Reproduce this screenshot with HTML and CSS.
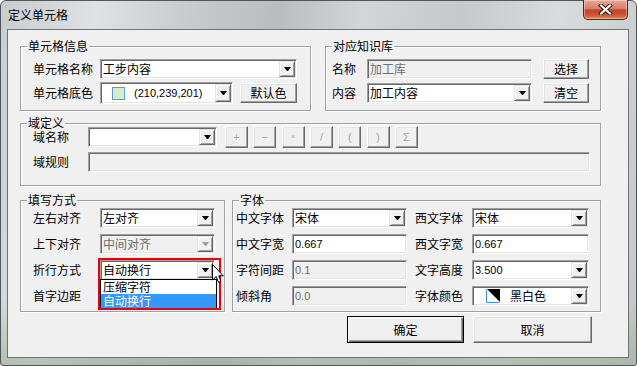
FILE: index.html
```html
<!DOCTYPE html>
<html lang="zh-CN">
<head>
  <meta charset="UTF-8" />
  <meta name="viewport" content="width=device-width, initial-scale=1.0"/>
  <title>定义单元格</title>
  <link rel="stylesheet" href="styles.css">
</head>
<body>

  <div class="window">

    <!-- Title bar -->
    <div class="titlebar">
      <span class="title">定义单元格</span>
      <div class="close-btn">
        <svg width="17" height="11" viewBox="0 0 17 11">
          <path d="M4 1.5 L13 9.5 M13 1.5 L4 9.5" stroke="#3b1a12" stroke-width="4.2" stroke-linecap="square" fill="none"/>
          <path d="M4 1.5 L13 9.5 M13 1.5 L4 9.5" stroke="#fff" stroke-width="2.2" stroke-linecap="square" fill="none"/>
        </svg>
      </div>
    </div>

    <!-- Client area -->
    <div class="client">

      <div class="row row-top">
        <!-- 单元格信息 -->
        <div class="group cell-info">
          <div class="group-title">单元格信息</div>
          <div class="form">
            <div class="form-row">
              <span class="label lw-67">单元格名称</span>
              <div class="field w-197">
                <span class="field-text">工步内容</span>
                <span class="drop-btn"></span>
              </div>
            </div>
            <div class="form-row">
              <span class="label lw-67">单元格底色</span>
              <div class="field color-field w-133">
                <span class="swatch"></span>
                <span class="field-text num">(210,239,201)</span>
                <span class="drop-btn"></span>
              </div>
              <button class="btn btn-default-color">默认色</button>
            </div>
          </div>
        </div>

        <!-- 对应知识库 -->
        <div class="group knowledge">
          <div class="group-title">对应知识库</div>
          <div class="form">
            <div class="form-row">
              <span class="label lw-35">名称</span>
              <div class="field disabled w-165">
                <span class="field-text">加工库</span>
              </div>
              <button class="btn btn-side">选择</button>
            </div>
            <div class="form-row">
              <span class="label lw-35">内容</span>
              <div class="field w-165">
                <span class="field-text">加工内容</span>
                <span class="drop-btn"></span>
              </div>
              <button class="btn btn-side">清空</button>
            </div>
          </div>
        </div>
      </div>

      <!-- 域定义 -->
      <div class="group domain">
        <div class="group-title">域定义</div>
        <div class="form">
          <div class="form-row">
            <span class="label lw-55">域名称</span>
            <div class="field w-129">
              <span class="field-text"></span>
              <span class="drop-btn"></span>
            </div>
            <div class="ops">
              <button class="btn op-btn">+</button>
              <button class="btn op-btn">−</button>
              <button class="btn op-btn op-small">×</button>
              <button class="btn op-btn">/</button>
              <button class="btn op-btn">(</button>
              <button class="btn op-btn">)</button>
              <button class="btn op-btn">Σ</button>
            </div>
          </div>
          <div class="form-row">
            <span class="label lw-55">域规则</span>
            <div class="field disabled w-502">
              <span class="field-text"></span>
            </div>
          </div>
        </div>
      </div>

      <div class="row row-bottom">
        <!-- 填写方式 -->
        <div class="group fill-mode">
          <div class="group-title">填写方式</div>
          <div class="form">
            <div class="form-row">
              <span class="label lw-67">左右对齐</span>
              <div class="field w-115">
                <span class="field-text">左对齐</span>
                <span class="drop-btn"></span>
              </div>
            </div>
            <div class="form-row">
              <span class="label lw-67">上下对齐</span>
              <div class="field disabled w-115">
                <span class="field-text">中间对齐</span>
                <span class="drop-btn"></span>
              </div>
            </div>
            <div class="form-row">
              <span class="label lw-67">折行方式</span>
              <div class="combo-wrap">
                <div class="field w-115">
                  <span class="field-text">自动换行</span>
                  <span class="drop-btn"></span>
                </div>
                <div class="drop-list">
                  <div class="drop-item">压缩字符</div>
                  <div class="drop-item selected">自动换行</div>
                </div>
                <div class="highlight"></div>
                <svg class="cursor" width="12" height="20" viewBox="0 0 12 20">
                  <path d="M0.5 0.5 V16 L4.2 12.6 L6.6 18.4 L9 17.4 L6.7 11.8 H11.3 Z" fill="#fff" stroke="#000" stroke-width="1"/>
                </svg>
              </div>
            </div>
            <div class="form-row">
              <span class="label lw-67">首字边距</span>
            </div>
          </div>
        </div>

        <!-- 字体 -->
        <div class="group font-group">
          <div class="group-title">字体</div>
          <div class="form">
            <div class="form-row">
              <span class="label lw-56">中文字体</span>
              <div class="field w-115">
                <span class="field-text">宋体</span>
                <span class="drop-btn"></span>
              </div>
              <span class="label lw-57 col-gap">西文字体</span>
              <div class="field w-117">
                <span class="field-text">宋体</span>
                <span class="drop-btn"></span>
              </div>
            </div>
            <div class="form-row">
              <span class="label lw-56">中文字宽</span>
              <div class="field w-115">
                <span class="field-text num">0.667</span>
              </div>
              <span class="label lw-57 col-gap">西文字宽</span>
              <div class="field w-117">
                <span class="field-text num">0.667</span>
              </div>
            </div>
            <div class="form-row">
              <span class="label lw-56">字符间距</span>
              <div class="field disabled w-115">
                <span class="field-text num">0.1</span>
              </div>
              <span class="label lw-57 col-gap">文字高度</span>
              <div class="field w-117">
                <span class="field-text num">3.500</span>
                <span class="drop-btn"></span>
              </div>
            </div>
            <div class="form-row">
              <span class="label lw-56">倾斜角</span>
              <div class="field disabled w-115">
                <span class="field-text num">0.0</span>
              </div>
              <span class="label lw-57 col-gap">字体颜色</span>
              <div class="field w-117">
                <svg class="color-mark" width="14" height="14" viewBox="0 0 14 14">
                  <path d="M0.5 0.5 V13.5 H13.5" stroke="#3c8ee0" fill="none"/>
                  <path d="M1 0 H14 V13 Z" fill="#000"/>
                </svg>
                <span class="field-text color-name">黑白色</span>
                <span class="drop-btn"></span>
              </div>
            </div>
          </div>
        </div>
      </div>

      <!-- Dialog buttons -->
      <div class="actions">
        <button class="btn btn-dialog btn-ok">确定</button>
        <button class="btn btn-dialog btn-cancel">取消</button>
      </div>

    </div>
  </div>

</body>
</html>
```

FILE: styles.css
```css
:root {
  --face: #f0f0f0;
  --light: #e3e3e3;
  --shadow: #a0a0a0;
  --dark: #696969;
  --gray-text: #6d6d6d;
}

* {
  box-sizing: border-box;
  margin: 0;
  padding: 0;
}

body {
  width: 637px;
  height: 366px;
  overflow: hidden;
  font-family: "Noto Sans CJK SC", "Noto Sans", sans-serif;
  font-size: 12px;
  color: #000;
  background: #fff;
}

/* Window frame */
.window {
  width: 637px;
  height: 366px;
  display: flex;
  flex-direction: column;
  border: 1px solid #50555b;
  border-radius: 6px 6px 3px 3px;
  background:
    linear-gradient(to bottom, rgba(0, 0, 0, 0) 82%, rgba(150, 175, 145, 0.6) 100%),
    linear-gradient(100deg, #c9cdd0 0%, #dfe1e3 14%, #c6cacd 28%, #b9bdc0 40%, #d3d6d8 52%, #c6c9cc 66%, #d9dbdd 80%, #c1c9c3 100%);
}

.titlebar {
  flex: none;
  height: 28px;
  display: flex;
  align-items: flex-start;
  padding-left: 7px;
}

.title {
  margin-top: 6px;
  line-height: 16px;
}

.close-btn {
  margin-left: auto;
  margin-right: 8px;
  margin-top: -1px;
  width: 45px;
  height: 20px;
  display: flex;
  align-items: center;
  justify-content: center;
  border: 1px solid #5b2418;
  border-top: none;
  border-radius: 0 0 5px 5px;
  background: linear-gradient(#e9a897 0%, #d9806a 45%, #c4462c 52%, #c8502f 75%, #e0876a 100%);
  box-shadow: inset 0 0 0 1px rgba(255, 255, 255, 0.35);
}

.client {
  flex: 1;
  margin: 0 7px 7px 6px;
  background: var(--face);
  border: 1px solid #6f7378;
  padding: 16px 0 0 12px;
  display: flex;
  flex-direction: column;
}

.row {
  display: flex;
}

.row-top {
  gap: 14px;
}

.row-bottom {
  gap: 7px;
  margin-top: 14px;
}

/* Group boxes */
.group {
  border: 1px solid var(--shadow);
  box-shadow: inset 1px 1px #fff, 1px 1px #fff;
}

.group-title {
  width: fit-content;
  height: 14px;
  line-height: 14px;
  margin: -8px 0 -6px 6px;
  padding: 0 1px;
  background: var(--face);
}

.cell-info {
  width: 291px;
}

.knowledge {
  width: 276px;
}

.domain {
  width: 581px;
  margin-top: 12px;
}

.fill-mode {
  width: 205px;
}

.font-group {
  width: 369px;
}

.form {
  display: flex;
  flex-direction: column;
}

.form-row {
  display: flex;
  align-items: center;
}

.cell-info .form,
.knowledge .form {
  gap: 2px;
  padding: 11px 0 6px 12px;
}

.knowledge .form {
  padding-left: 6px;
}

.cell-info .form-row,
.knowledge .form-row {
  height: 22px;
}

.domain .form {
  gap: 4px;
  padding: 2px 0 13px 12px;
}

.domain .form-row {
  height: 20px;
}

.domain .form-row:first-child {
  height: 22px;
}

.fill-mode .form,
.font-group .form {
  gap: 6px;
  padding: 7px 0 5px 12px;
}

.font-group .form {
  padding-left: 3px;
}

.fill-mode .form-row,
.font-group .form-row {
  height: 20px;
}

/* Labels */
.label {
  flex: none;
  line-height: 14px;
  white-space: nowrap;
}

.lw-35 { width: 35px; }
.lw-55 { width: 55px; }
.lw-56 { width: 56px; }
.lw-57 { width: 57px; }
.lw-67 { width: 67px; }

.col-gap {
  margin-left: 8px;
}

/* Edits and combos */
.field {
  flex: none;
  height: 20px;
  display: flex;
  align-items: center;
  background: #fff;
  border: 1px solid;
  border-color: var(--shadow) #fff #fff var(--shadow);
  box-shadow: inset 1px 1px var(--dark), inset -1px -1px var(--light);
}

.field.disabled {
  background: var(--face);
  color: var(--gray-text);
}

.w-115 { width: 115px; }
.w-117 { width: 117px; }
.w-129 { width: 129px; }
.w-133 { width: 133px; }
.w-165 { width: 165px; }
.w-197 { width: 197px; }
.w-502 { width: 502px; }

.field-text {
  flex: 1;
  padding-left: 2px;
  line-height: 16px;
  white-space: nowrap;
  overflow: hidden;
}

.num {
  font-family: "Liberation Sans", Arial, sans-serif;
  font-size: 11px;
  padding-left: 2px;
}

.color-field {
  height: 22px;
}

.swatch {
  flex: none;
  width: 13px;
  height: 13px;
  margin: 0 9px 0 11px;
  background: rgb(210, 239, 201);
  border: 1px solid #5a9ae0;
}

.color-field .field-text {
  padding-left: 0;
}

.color-mark {
  flex: none;
  margin-left: 13px;
}

.color-name {
  padding-left: 10px;
}

.drop-btn {
  flex: none;
  align-self: stretch;
  width: 16px;
  margin: 1px 1px 1px 0;
  background: var(--face);
  border: 1px solid;
  border-color: var(--light) var(--dark) var(--dark) var(--light);
  box-shadow: inset 1px 1px #fff, inset -1px -1px var(--shadow);
  display: flex;
  align-items: center;
  justify-content: center;
}

.drop-btn::after {
  content: "";
  width: 1px;
  height: 0;
  border-left: 3px solid transparent;
  border-right: 3px solid transparent;
  border-top: 4px solid #000;
}

.field.disabled .drop-btn::after {
  border-top-color: var(--shadow);
}

/* Dropdown list of 折行方式 */
.combo-wrap {
  position: relative;
}

.drop-list {
  position: absolute;
  top: 19px;
  left: 0;
  width: 117px;
  background: #fff;
  border: 1px solid #000;
  z-index: 2;
}

.drop-item {
  height: 14px;
  line-height: 14px;
  padding-left: 2px;
}

.drop-item.selected {
  background: #3399ff;
  color: #fff;
}

.highlight {
  position: absolute;
  left: -2px;
  top: -2px;
  width: 123px;
  height: 52px;
  border: 2px solid #e8000b;
  z-index: 3;
}

.cursor {
  position: absolute;
  left: 112px;
  top: 4px;
  z-index: 4;
}

/* Buttons */
.btn {
  flex: none;
  height: 20px;
  font: inherit;
  color: #000;
  background: var(--face);
  border: 1px solid;
  border-color: #fff var(--dark) var(--dark) #fff;
  box-shadow: inset -1px -1px var(--shadow), inset 1px 1px var(--light);
  display: flex;
  align-items: center;
  justify-content: center;
  line-height: 14px;
}

.btn-default-color {
  width: 57px;
  margin-left: 7px;
}

.btn-side {
  width: 46px;
  margin-left: 11px;
}

.ops {
  display: flex;
  gap: 5.33px;
  margin-left: 8px;
}

.op-btn {
  width: 23px;
  height: 22px;
  color: var(--shadow);
  text-shadow: 1px 1px #fff;
  font-family: "Liberation Sans", Arial, sans-serif;
  font-size: 11px;
}

.op-small {
  font-size: 8px;
  align-items: flex-start;
  padding-top: 3px;
}

.actions {
  display: flex;
  gap: 9px;
  margin-top: 4px;
  padding-left: 327px;
}

.btn-dialog {
  height: 27px;
}

.btn-ok {
  width: 117px;
  border-color: #000;
  box-shadow: inset 1px 1px #fff, inset -1px -1px var(--dark), inset -2px -2px var(--shadow);
}

.btn-cancel {
  width: 119px;
}
```
